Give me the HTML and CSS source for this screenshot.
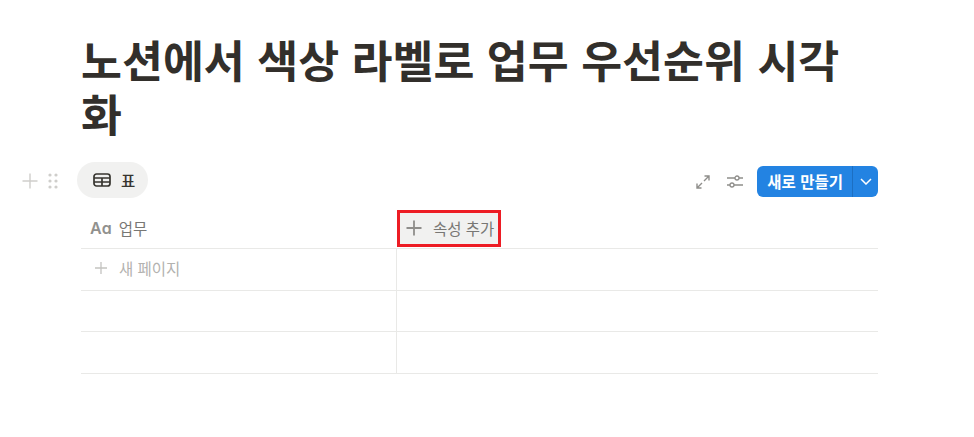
FILE: index.html
```html
<!DOCTYPE html>
<html lang="ko">
<head>
    <meta charset="UTF-8">
    <title>노션에서 색상 라벨로 업무 우선순위 시각화</title>
    <link rel="stylesheet" href="styles.css">
</head>
<body>

<div class="page">
    <h1 class="title">노션에서 색상 라벨로 업무 우선순위 시각화</h1>

    <div class="block">
        <!-- hover handles left of the block -->
        <div class="handles">
            <svg width="16" height="16" viewBox="0 0 16 16"><path d="M8 0.5V15.5M0.5 8H15.5" stroke="#cfcecb" stroke-width="1.4" fill="none"/></svg>
            <svg width="10" height="16" viewBox="0 0 10 16" fill="#cfcecb">
                <circle cx="2" cy="2" r="1.6"/><circle cx="8" cy="2" r="1.6"/>
                <circle cx="2" cy="8" r="1.6"/><circle cx="8" cy="8" r="1.6"/>
                <circle cx="2" cy="14" r="1.6"/><circle cx="8" cy="14" r="1.6"/>
            </svg>
        </div>

        <div class="toolbar">
            <div class="view-tab">
                <svg width="18" height="14" viewBox="0 0 18 14" fill="none" stroke="#37352f" stroke-width="1.7">
                    <rect x="1" y="1" width="16" height="12" rx="2.5"/>
                    <path d="M1 5H17M1 9H17M9 5V13"/>
                </svg>
                <span>표</span>
            </div>
            <div class="actions">
                <svg width="14" height="14" viewBox="0 0 14 14" fill="none" stroke="#8f8e8b" stroke-width="1.4">
                    <path d="M8 6L13 1M8.5 1H13V5.5M6 8L1 13M1 8.5V13H5.5"/>
                </svg>
                <svg class="sliders" width="16" height="13" viewBox="0 0 16 13" fill="none" stroke="#8f8e8b" stroke-width="1.3">
                    <path d="M0 3H8M12 3H16M0 10H3M7 10H16"/>
                    <circle cx="10" cy="3" r="2"/><circle cx="5" cy="10" r="2"/>
                </svg>
                <div class="new-button">
                    <span class="new-label">새로 만들기</span>
                    <span class="new-arrow">
                        <svg width="12" height="7" viewBox="0 0 12 7" fill="none" stroke="#fff" stroke-width="1.5"><path d="M1 1L6 6L11 1"/></svg>
                    </span>
                </div>
            </div>
        </div>

        <div class="table">
            <div class="row head">
                <div class="cell first">
                    <span class="aa">Aɑ</span>
                    <span>업무</span>
                </div>
                <div class="cell second">
                    <div class="add-prop">
                        <svg width="16" height="16" viewBox="0 0 16 16"><path d="M8 0.5V15.5M0.5 8H15.5" stroke="#8f8e8b" stroke-width="1.8" fill="none"/></svg>
                        <span>속성 추가</span>
                    </div>
                </div>
            </div>
            <div class="row">
                <div class="cell first new-page">
                    <svg width="12" height="12" viewBox="0 0 12 12"><path d="M6 0V12M0 6H12" stroke="#c4c3c0" stroke-width="1.3" fill="none"/></svg>
                    <span>새 페이지</span>
                </div>
                <div class="cell second"></div>
            </div>
            <div class="row">
                <div class="cell first"></div>
                <div class="cell second"></div>
            </div>
            <div class="row">
                <div class="cell first"></div>
                <div class="cell second"></div>
            </div>
        </div>
    </div>
</div>

</body>
</html>
```

FILE: styles.css
```css
/* Notion style database page */
body {
    margin: 0;
    font-family: "Noto Sans CJK KR", "Noto Sans", sans-serif;
    background-color: #fff;
    color: #37352f;
}
.page {
    width: 797px;
    margin-left: 81px;
    padding-top: 32px;
}
.title {
    width: 770px;
    margin: 0;
    font-size: 44.5px;
    font-weight: 700;
    line-height: 54px;
    color: #322f2b;
}
.block {
    position: relative;
    margin-top: 22px;
}
.handles {
    position: absolute;
    left: -59px;
    top: 11px;
    display: flex;
    align-items: center;
    gap: 10px;
}
.toolbar {
    display: flex;
    justify-content: space-between;
    height: 48px;
}
.view-tab {
    display: flex;
    align-items: center;
    gap: 10px;
    height: 36px;
    margin-left: -4px;
    padding: 0 13px 0 16px;
    border-radius: 18px;
    background-color: #f1f1f0;
    font-size: 15.5px;
    font-weight: 500;
}
.actions {
    display: flex;
    align-items: center;
    height: 31px;
    margin-top: 4px;
}
.sliders {
    margin-left: 17px;
}
.new-button {
    display: flex;
    align-items: center;
    height: 31px;
    margin-left: 14px;
    border-radius: 6px;
    background-color: #2383e2;
    color: #fff;
    font-size: 15.5px;
    font-weight: 700;
}
.new-label {
    padding: 0 9px 0 10px;
    line-height: 31px;
}
.new-arrow {
    display: flex;
    align-items: center;
    justify-content: center;
    width: 26px;
    height: 31px;
    border-left: 1px solid #1c6fc2;
    box-sizing: border-box;
}
.table {
    font-size: 15.5px;
}
.row {
    display: flex;
    height: 41.5px;
    box-sizing: border-box;
    border-bottom: 1px solid #e9e9e7;
}
.row.head {
    height: 39px;
}
.cell {
    display: flex;
    align-items: center;
    box-sizing: border-box;
    padding-bottom: 2px;
}
.first {
    width: 316px;
    padding-left: 9px;
    border-right: 1px solid #e9e9e7;
    color: #787774;
}
.head .first {
    border-right: none;
}
.second {
    flex: 1;
}
.aa {
    margin-right: 7px;
    font-family: "Inter", sans-serif;
    font-size: 16px;
    font-weight: 600;
    color: #91918e;
}
.add-prop {
    position: absolute;
    left: 316px;
    top: 48px;
    display: flex;
    align-items: center;
    gap: 11px;
    width: 104px;
    height: 37px;
    box-sizing: border-box;
    padding: 0 0 2px 6px;
    border: 3px solid #ed1c24;
    background-color: #f1f1f0;
    color: #787774;
}
.new-page {
    padding-left: 14px;
    gap: 12px;
    color: #b3b2af;
}
```
